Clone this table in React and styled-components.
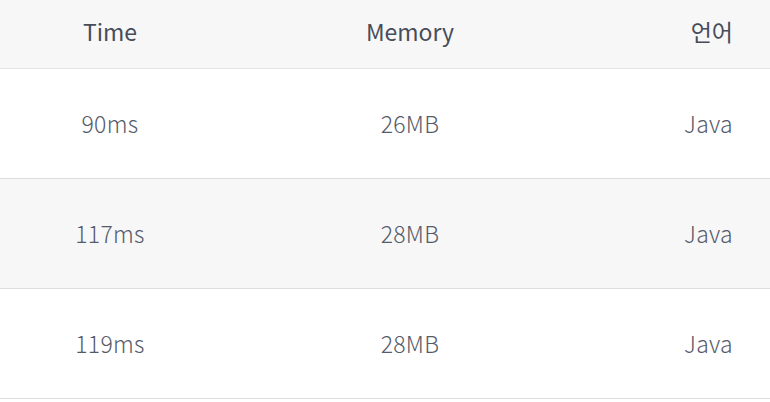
import React from "react";
import styled, { createGlobalStyle } from "styled-components";

const GlobalStyle = createGlobalStyle`
  html, body {
    margin: 0;
    padding: 0;
    background: #ffffff;
  }
  body {
    font-family: "Noto Sans CJK KR", "Noto Sans", sans-serif;
  }
`;

const Table = styled.div`
  width: 770px;
  display: flex;
  flex-direction: column;
  background: #f4f4f4;
`;

const Row = styled.div`
  display: grid;
  grid-template-columns: 220px 380px 1fr;
  align-items: center;
  height: ${(p) => (p.$head ? "68px" : "109px")};
  background: ${(p) => (p.$striped || p.$head ? "#f7f7f7" : "#ffffff")};
  border-bottom: 1px solid ${(p) => (p.$head ? "#e6e6e6" : "#dddddd")};
`;

const Cell = styled.div`
  text-align: ${(p) => (p.$right ? "right" : "center")};
  padding-right: ${(p) => (p.$right ? "37px" : "0")};
  font-size: 23px;
  line-height: 1;
  letter-spacing: ${(p) => (p.$head ? "0" : "0.3px")};
  color: ${(p) => (p.$head ? "#474c5a" : "#565b69")};
  font-weight: ${(p) => (p.$head ? 400 : 300)};
  padding-bottom: ${(p) => (p.$head ? "6px" : "0")};
`;

const rows = [
  { time: "90ms", memory: "26MB", lang: "Java" },
  { time: "117ms", memory: "28MB", lang: "Java" },
  { time: "119ms", memory: "28MB", lang: "Java" },
];

export default function App() {
  return (
    <>
      <GlobalStyle />
      <Table>
        <Row $head>
          <Cell $head>Time</Cell>
          <Cell $head>Memory</Cell>
          <Cell $head $right>언어</Cell>
        </Row>
        {rows.map((r, i) => (
          <Row key={i} $striped={i % 2 === 1}>
            <Cell>{r.time}</Cell>
            <Cell>{r.memory}</Cell>
            <Cell $right>{r.lang}</Cell>
          </Row>
        ))}
      </Table>
    </>
  );
}
